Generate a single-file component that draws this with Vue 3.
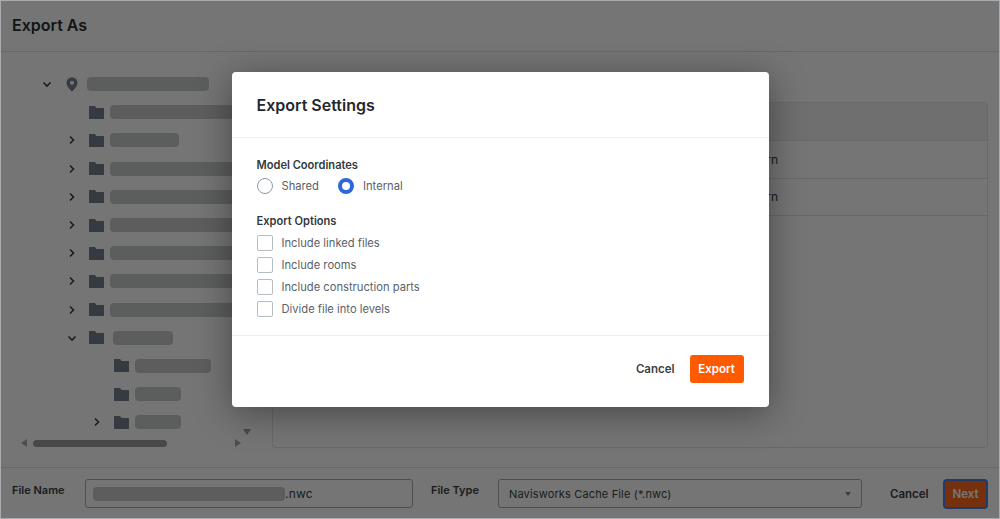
<template>
  <div class="page">
    <header class="top">Export As</header>

    <main class="body">
      <section class="tree-pane">
        <div class="tree">
          <div
            v-for="(row, i) in treeRows"
            :key="i"
            class="tree-row"
            :style="{ paddingLeft: row.level * 25 + 34 + 'px' }"
          >
            <span class="chevron">
              <svg v-if="row.arrow === 'down'" width="10" height="10" viewBox="0 0 10 10">
                <path d="M1.5 3.5 5 7l3.5-3.5" fill="none" stroke="currentColor" stroke-width="1.6" />
              </svg>
              <svg v-else-if="row.arrow === 'right'" width="10" height="10" viewBox="0 0 10 10">
                <path d="M3 1.5 6.5 5 3 8.500" fill="none" stroke="currentColor" stroke-width="1.6" />
              </svg>
            </span>
            <span class="node-icon">
              <svg v-if="row.pin" width="12" height="15" viewBox="0 0 12 15">
                <path
                  fill-rule="evenodd"
                  d="M6 .5C2.900.5.500 2.900.500 5.900.500 9.600 6 14.500 6 14.500s5.500-4.900 5.500-8.600C11.500 2.900 9.100.5 6 .5Zm0 7.400a2.100 2.100 0 1 1 0-4.200 2.100 2.100 0 0 1 0 4.200Z"
                />
              </svg>
              <svg v-else width="15" height="13" viewBox="0 0 15 13">
                <path d="M0 0h6l1.500 2H15v11H0z" />
              </svg>
            </span>
            <span class="blur-bar" :style="{ width: row.width + 'px', marginLeft: (row.gap || 1) + 'px' }"></span>
          </div>
        </div>

        <div class="scroll-v"></div>
        <div class="scroll-h">
          <span class="arrow-left"></span>
          <span class="thumb"></span>
          <span class="arrow-right"></span>
        </div>
      </section>

      <section class="table">
        <div class="table-head"></div>
        <div v-for="n in 2" :key="n" class="table-row"><span class="cell">Modern</span></div>
      </section>
    </main>

    <footer class="bottom">
      <label class="field-label name-label">File Name</label>
      <div class="field name-field">
        <span class="blur-bar name-bar"></span><span>.nwc</span>
      </div>
      <label class="field-label type-label">File Type</label>
      <div class="field type-field">
        <span>Navisworks Cache File (*.nwc)</span>
        <span class="caret"></span>
      </div>
      <button class="link-btn back-cancel">Cancel</button>
      <button class="next-btn">Next</button>
    </footer>

    <div class="overlay">
      <div class="modal">
        <div class="modal-head">Export Settings</div>
        <div class="modal-body">
          <div class="group-title">Model Coordinates</div>
          <div class="radios">
            <label class="radio-item">
              <span class="radio"></span>
              <span>Shared</span>
            </label>
            <label class="radio-item">
              <span class="radio on"></span>
              <span>Internal</span>
            </label>
          </div>
          <div class="group-title options-title">Export Options</div>
          <label v-for="opt in options" :key="opt" class="check-item">
            <span class="check"></span>
            <span>{{ opt }}</span>
          </label>
        </div>
        <div class="modal-foot">
          <button class="link-btn">Cancel</button>
          <button class="export-btn">Export</button>
        </div>
      </div>
    </div>
  </div>
</template>

<script setup>
const treeRows = [
  { level: 0, arrow: 'down', pin: true, width: 122, gap: 3 },
  { level: 1, width: 140 },
  { level: 1, arrow: 'right', width: 69 },
  { level: 1, arrow: 'right', width: 140 },
  { level: 1, arrow: 'right', width: 140 },
  { level: 1, arrow: 'right', width: 140 },
  { level: 1, arrow: 'right', width: 140 },
  { level: 1, arrow: 'right', width: 140 },
  { level: 1, arrow: 'right', width: 140 },
  { level: 1, arrow: 'down', width: 60, gap: 4 },
  { level: 2, width: 76 },
  { level: 2, width: 46 },
  { level: 2, arrow: 'right', width: 46 },
]

const options = [
  'Include linked files',
  'Include rooms',
  'Include construction parts',
  'Divide file into levels',
]
</script>

<style>
html,
body {
  margin: 0;
  background: #fff;
}
</style>

<style scoped>
.page {
  position: relative;
  width: 1000px;
  height: 519px;
  overflow: hidden;
  display: flex;
  flex-direction: column;
  background: #fff;
  color: #3a3f44;
  font-family: Inter, "Liberation Sans", sans-serif;
  box-sizing: border-box;
}

.top {
  height: 52px;
  flex: none;
  box-sizing: border-box;
  padding: 0 12px 2px;
  display: flex;
  align-items: center;
  border-bottom: 1px solid #dfe2e4;
  font-size: 16px;
  font-weight: 600;
  color: #2b2f33;
}

.body {
  flex: 1;
  min-height: 0;
  display: flex;
}

.tree-pane {
  position: relative;
  width: 258px;
  flex: none;
  margin-right: 14px;
}

.tree {
  padding-top: 18px;
  overflow: hidden;
  height: 380px;
}

.tree-row {
  height: 28.2px;
  display: flex;
  align-items: center;
}

.chevron,
.node-icon {
  width: 25px;
  flex: none;
  display: flex;
  justify-content: center;
  align-items: center;
}

.chevron {
  color: #3a4045;
}

.node-icon svg {
  fill: #75828b;
}

.blur-bar {
  display: inline-block;
  height: 14px;
  border-radius: 4px;
  background: #c8ccce;
  flex: none;
}

.scroll-v {
  position: absolute;
  left: 243px;
  top: 377px;
  width: 0;
  height: 0;
  border-left: 4px solid transparent;
  border-right: 4px solid transparent;
  border-top: 6px solid #9ea3a6;
}

.scroll-h {
  position: absolute;
  left: 21px;
  top: 387px;
  width: 220px;
  height: 8px;
  display: flex;
  align-items: center;
}

.thumb {
  position: absolute;
  left: 12px;
  width: 134px;
  height: 7px;
  border-radius: 4px;
  background: #9a9d9f;
}

.arrow-left {
  width: 0;
  height: 0;
  border-top: 4px solid transparent;
  border-bottom: 4px solid transparent;
  border-right: 6px solid #a7abae;
}

.arrow-right {
  margin-left: auto;
  width: 0;
  height: 0;
  border-top: 4px solid transparent;
  border-bottom: 4px solid transparent;
  border-left: 6px solid #a7abae;
}

.table {
  width: 716px;
  height: 346px;
  margin-top: 50px;
  box-sizing: border-box;
  border: 1px solid #e2e5e7;
  border-radius: 3px;
}

.table-head {
  height: 37px;
  background: #f1f2f3;
  border-bottom: 1px solid #e2e5e7;
}

.table-row {
  height: 37.5px;
  box-sizing: border-box;
  border-bottom: 1px solid #e2e5e7;
  font-size: 12px;
  display: flex;
  align-items: center;
}

.cell {
  width: 505px;
  text-align: right;
}

.bottom {
  height: 52px;
  flex: none;
  box-sizing: border-box;
  border-top: 1px solid #dfe2e4;
  display: flex;
  align-items: center;
  padding: 0 11px 0 12px;
  font-size: 12px;
}

.bottom > * {
  flex: none;
}

.field-label {
  font-size: 11px;
  font-weight: 600;
  margin-top: -7px;
}

.name-label {
  width: 73px;
}

.field {
  height: 29px;
  box-sizing: border-box;
  border: 1px solid #a5aaae;
  border-radius: 3px;
  display: flex;
  align-items: center;
  letter-spacing: 0.2px;
}

.name-field {
  width: 328px;
  padding-left: 7px;
}

.name-bar {
  width: 192px;
}

.type-label {
  margin-left: 18px;
  width: 67px;
}

.type-field {
  width: 364px;
  padding: 0 10px;
  justify-content: space-between;
  font-size: 11px;
  letter-spacing: 0.15px;
}

.caret {
  width: 0;
  height: 0;
  border-left: 3.500px solid transparent;
  border-right: 3.500px solid transparent;
  border-top: 4px solid #7d8286;
}

button {
  font-family: inherit;
  border: 0;
  background: none;
  padding: 0;
  font-size: 11.500px;
  font-weight: 600;
  color: #3a3f44;
}

.back-cancel {
  margin-left: 28px;
  width: 38px;
}

.next-btn {
  margin-left: 15px;
  width: 45px;
  height: 30px;
  box-sizing: border-box;
  background: #ff6a20;
  border: 2px solid #4a7fe0;
  border-radius: 4px;
  color: #fff;
}

.overlay {
  position: absolute;
  inset: 0;
  background: rgba(0, 0, 0, 0.54);
  box-shadow: inset 0 0 0 1px #a9abac;
}

.modal {
  position: absolute;
  left: 231.500px;
  top: 72px;
  width: 537.500px;
  height: 335px;
  display: flex;
  flex-direction: column;
  background: #fff;
  border-radius: 4px;
  box-shadow: 0 6px 36px rgba(0, 0, 0, 0.4);
}

.modal-head {
  height: 66px;
  flex: none;
  box-sizing: border-box;
  padding: 0 25px;
  display: flex;
  align-items: center;
  border-bottom: 1px solid #eceeef;
  font-size: 16px;
  font-weight: 600;
  color: #24282c;
}

.modal-body {
  flex: 1;
  padding: 20px 25px 0;
  font-size: 11.200px;
  color: #5b6167;
}

.group-title {
  height: 14px;
  line-height: 14px;
  font-size: 11.100px;
  font-weight: 600;
  color: #33383c;
}

.radios {
  display: flex;
  gap: 19px;
  margin-top: 6px;
  height: 16px;
}

.radio-item,
.check-item {
  display: flex;
  align-items: center;
  gap: 9px;
}

.radio {
  width: 16px;
  height: 16px;
  box-sizing: border-box;
  border: 1.500px solid #8b9aa5;
  border-radius: 50%;
}

.radio.on {
  border: 4.500px solid #2b68e0;
}

.options-title {
  margin-top: 20px;
  margin-bottom: 4px;
}

.check-item {
  height: 22px;
}

.check {
  width: 16px;
  height: 16px;
  box-sizing: border-box;
  border: 1.500px solid #b3bdc3;
  border-radius: 2px;
}

.modal-foot {
  height: 72px;
  flex: none;
  box-sizing: border-box;
  border-top: 1px solid #eceeef;
  padding: 0 25.500px 6px 25px;
  display: flex;
  justify-content: flex-end;
  align-items: center;
  gap: 15px;
}

.export-btn {
  width: 54px;
  height: 28px;
  background: #ff5a00;
  border-radius: 3px;
  color: #fff;
}
</style>
